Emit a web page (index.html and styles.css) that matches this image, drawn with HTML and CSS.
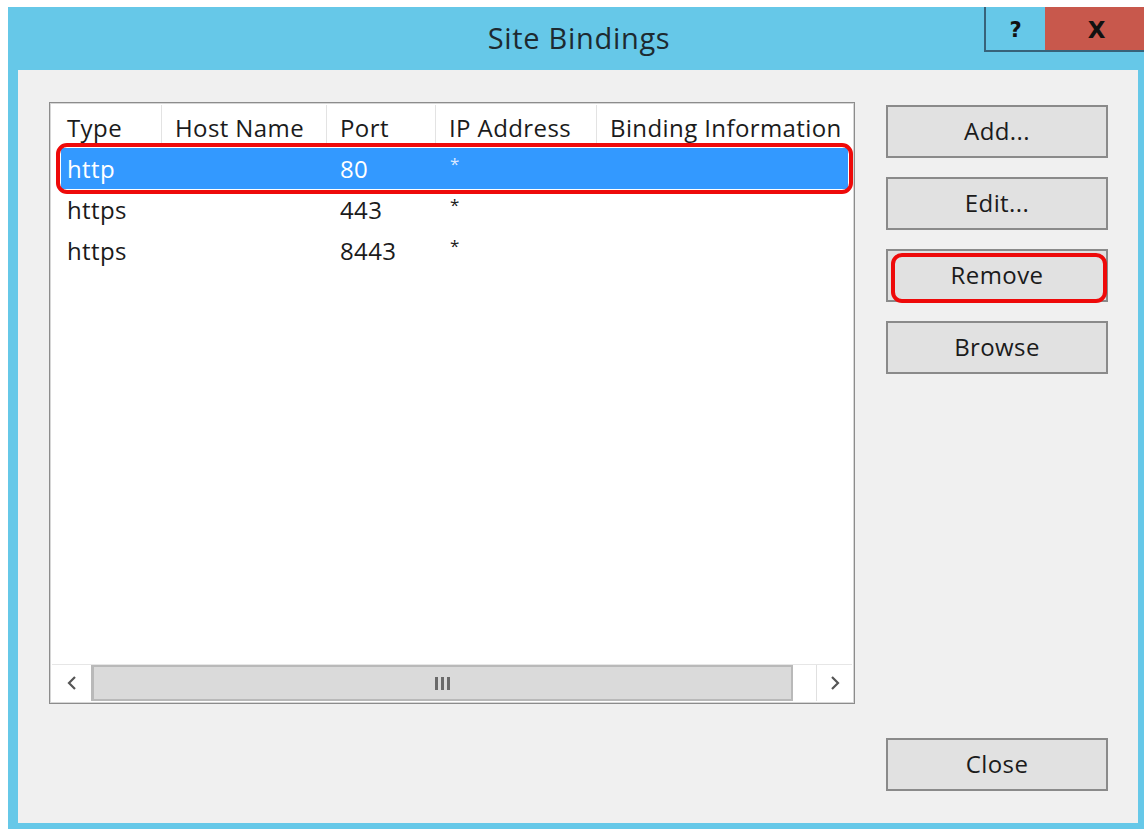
FILE: index.html
```html
<!DOCTYPE html>
<html lang="en">
<head>
<meta charset="utf-8">
<title>Site Bindings</title>
<link rel="stylesheet" href="styles.css">
</head>
<body>
<div class="window">
  <div class="titlebar">
    <div class="title">Site Bindings</div>
    <div class="caption-buttons">
      <div class="cap-btn help">?</div>
      <div class="cap-btn close">X</div>
    </div>
  </div>
  <div class="content">
    <div class="main">
      <div class="listview">
        <div class="lv-head">
          <div class="col c1">Type</div>
          <div class="col c2">Host Name</div>
          <div class="col c3">Port</div>
          <div class="col c4">IP Address</div>
          <div class="col c5">Binding Information</div>
        </div>
        <div class="lv-body">
          <div class="row selected">
            <div class="col c1">http</div>
            <div class="col c2"></div>
            <div class="col c3">80</div>
            <div class="col c4 star">*</div>
            <div class="col c5"></div>
            <div class="mark row-mark"></div>
          </div>
          <div class="row">
            <div class="col c1">https</div>
            <div class="col c2"></div>
            <div class="col c3">443</div>
            <div class="col c4 star">*</div>
            <div class="col c5"></div>
          </div>
          <div class="row">
            <div class="col c1">https</div>
            <div class="col c2"></div>
            <div class="col c3">8443</div>
            <div class="col c4 star">*</div>
            <div class="col c5"></div>
          </div>
        </div>
        <div class="hscroll">
          <div class="sb-btn left">
            <svg width="14" height="16" viewBox="0 0 14 16"><path d="M10 2 L4 8 L10 14" fill="none" stroke="#555" stroke-width="2.2"/></svg>
          </div>
          <div class="sb-thumb">
            <span class="grip"></span><span class="grip"></span><span class="grip"></span>
          </div>
          <div class="sb-rest"></div>
          <div class="sb-btn right">
            <svg width="14" height="16" viewBox="0 0 14 16"><path d="M4 2 L10 8 L4 14" fill="none" stroke="#555" stroke-width="2.2"/></svg>
          </div>
        </div>
      </div>
      <div class="side">
        <div class="actions">
          <button class="btn">Add...</button>
          <button class="btn">Edit...</button>
          <button class="btn marked">Remove<span class="mark btn-mark"></span></button>
          <button class="btn">Browse</button>
        </div>
        <button class="btn">Close</button>
      </div>
    </div>
  </div>
</div>
</body>
</html>
```

FILE: styles.css
```css
html, body {
  margin: 0;
  padding: 0;
  background: #ffffff;
}

body {
  font-family: "Open Sans", "Noto Sans", "Liberation Sans", sans-serif;
  color: #1b1b1b;
}

.window {
  margin: 7px 2px 0 8px;
  height: 822px;
  background: #66c8e8;
  display: flex;
  flex-direction: column;
}

/* caption bar */
.titlebar {
  height: 63px;
  position: relative;
  display: flex;
  align-items: center;
  justify-content: center;
  flex: none;
}

.title {
  font-size: 29px;
  letter-spacing: 0.7px;
  color: #1d2a30;
  margin-top: -2px;
  margin-left: 6px;
}

.caption-buttons {
  position: absolute;
  top: 0;
  right: 0;
  display: flex;
}

.cap-btn {
  height: 45px;
  display: flex;
  align-items: center;
  justify-content: center;
  font-family: "DejaVu Sans", sans-serif;
  font-weight: bold;
  font-size: 21px;
  color: #111;
  box-sizing: border-box;
}

.cap-btn.help {
  width: 61px;
  border-left: 2px solid #37637a;
  border-bottom: 2px solid #37637a;
  padding-top: 2px;
}

.cap-btn.close {
  width: 99px;
  background: #c8584c;
  border-bottom: 2px solid #37637a;
  font-size: 23px;
  padding-top: 2px;
  padding-left: 4px;
}

/* client area */
.content {
  flex: 1;
  margin: 0 6px 6px 10px;
  background: #f0f0f0;
}

.main {
  display: flex;
  padding: 32px 30px 0 31px;
  gap: 31px;
}

.listview {
  width: 806px;
  height: 602px;
  box-sizing: border-box;
  border: 1px solid #8c8c8c;
  box-shadow: inset 0 0 0 1px #d6d6d6;
  background: #fff;
  display: flex;
  flex-direction: column;
  padding: 2px;
  position: relative;
}

.lv-head, .row {
  display: flex;
  font-size: 24px;
  letter-spacing: 0.4px;
}

.lv-head {
  height: 42px;
  align-items: center;
}

.lv-head .col {
  height: 100%;
  display: flex;
  align-items: center;
  border-right: 1px solid #e3e3e3;
  padding-top: 2px;
  box-sizing: border-box;
}

.lv-head .col.c5 {
  border-right: none;
}

.col {
  padding-left: 13px;
  box-sizing: border-box;
  white-space: nowrap;
}

.c1 { width: 110px; padding-left: 15px; }
.c2 { width: 165px; }
.c3 { width: 109px; }
.c4 { width: 161px; }
.c5 { flex: 1; }

.lv-body {
  flex: 1;
  padding-top: 1px;
}

.row {
  height: 41px;
  align-items: center;
  position: relative;
}

.row.selected {
  background: #3399ff;
  color: #fff;
  margin: 0 4px 0 9px;
}

.row.selected .c1 {
  width: 101px;
  padding-left: 6px;
}

.star {
  font-size: 17px;
  align-self: flex-start;
  margin-top: 4px;
  padding-left: 14px;
}

.row.selected .star {
  color: #dbe9ff;
}

/* red annotation outlines */
.mark {
  position: absolute;
  border: 4px solid #ee0a0a;
  border-radius: 11px;
  pointer-events: none;
}

.row-mark {
  left: -5px;
  right: -5px;
  top: -5px;
  bottom: -5px;
}

/* horizontal scrollbar */
.hscroll {
  height: 36px;
  display: flex;
  align-items: stretch;
  border-top: 1px solid #e6e6e6;
}

.sb-btn {
  width: 39px;
  display: flex;
  align-items: center;
  justify-content: center;
  background: #fff;
}

.sb-btn.right {
  width: 35px;
  border-left: 1px solid #e0e0e0;
}

.sb-thumb {
  width: 702px;
  box-sizing: border-box;
  background: #dadada;
  border: 2px solid #b9b9b9;
  border-left-width: 3px;
  display: flex;
  align-items: center;
  justify-content: center;
  gap: 3px;
}

.grip {
  width: 3px;
  height: 13px;
  background: #6a6a6a;
}

.sb-rest {
  flex: 1;
  background: #fff;
}

/* side buttons */
.side {
  width: 222px;
  height: 686px;
  display: flex;
  flex-direction: column;
  justify-content: space-between;
  padding-top: 3px;
}

.actions {
  display: flex;
  flex-direction: column;
  gap: 19px;
}

.btn {
  width: 222px;
  height: 53px;
  box-sizing: border-box;
  background: #e1e1e1;
  border: 2px solid #8a8a8a;
  font-family: inherit;
  font-size: 24px;
  letter-spacing: 0.4px;
  color: #1b1b1b;
  padding: 0 0 3px 0;
  margin: 0;
  position: relative;
}

.btn-mark {
  left: 3px;
  right: -1px;
  top: 2px;
  bottom: -3px;
}
```
